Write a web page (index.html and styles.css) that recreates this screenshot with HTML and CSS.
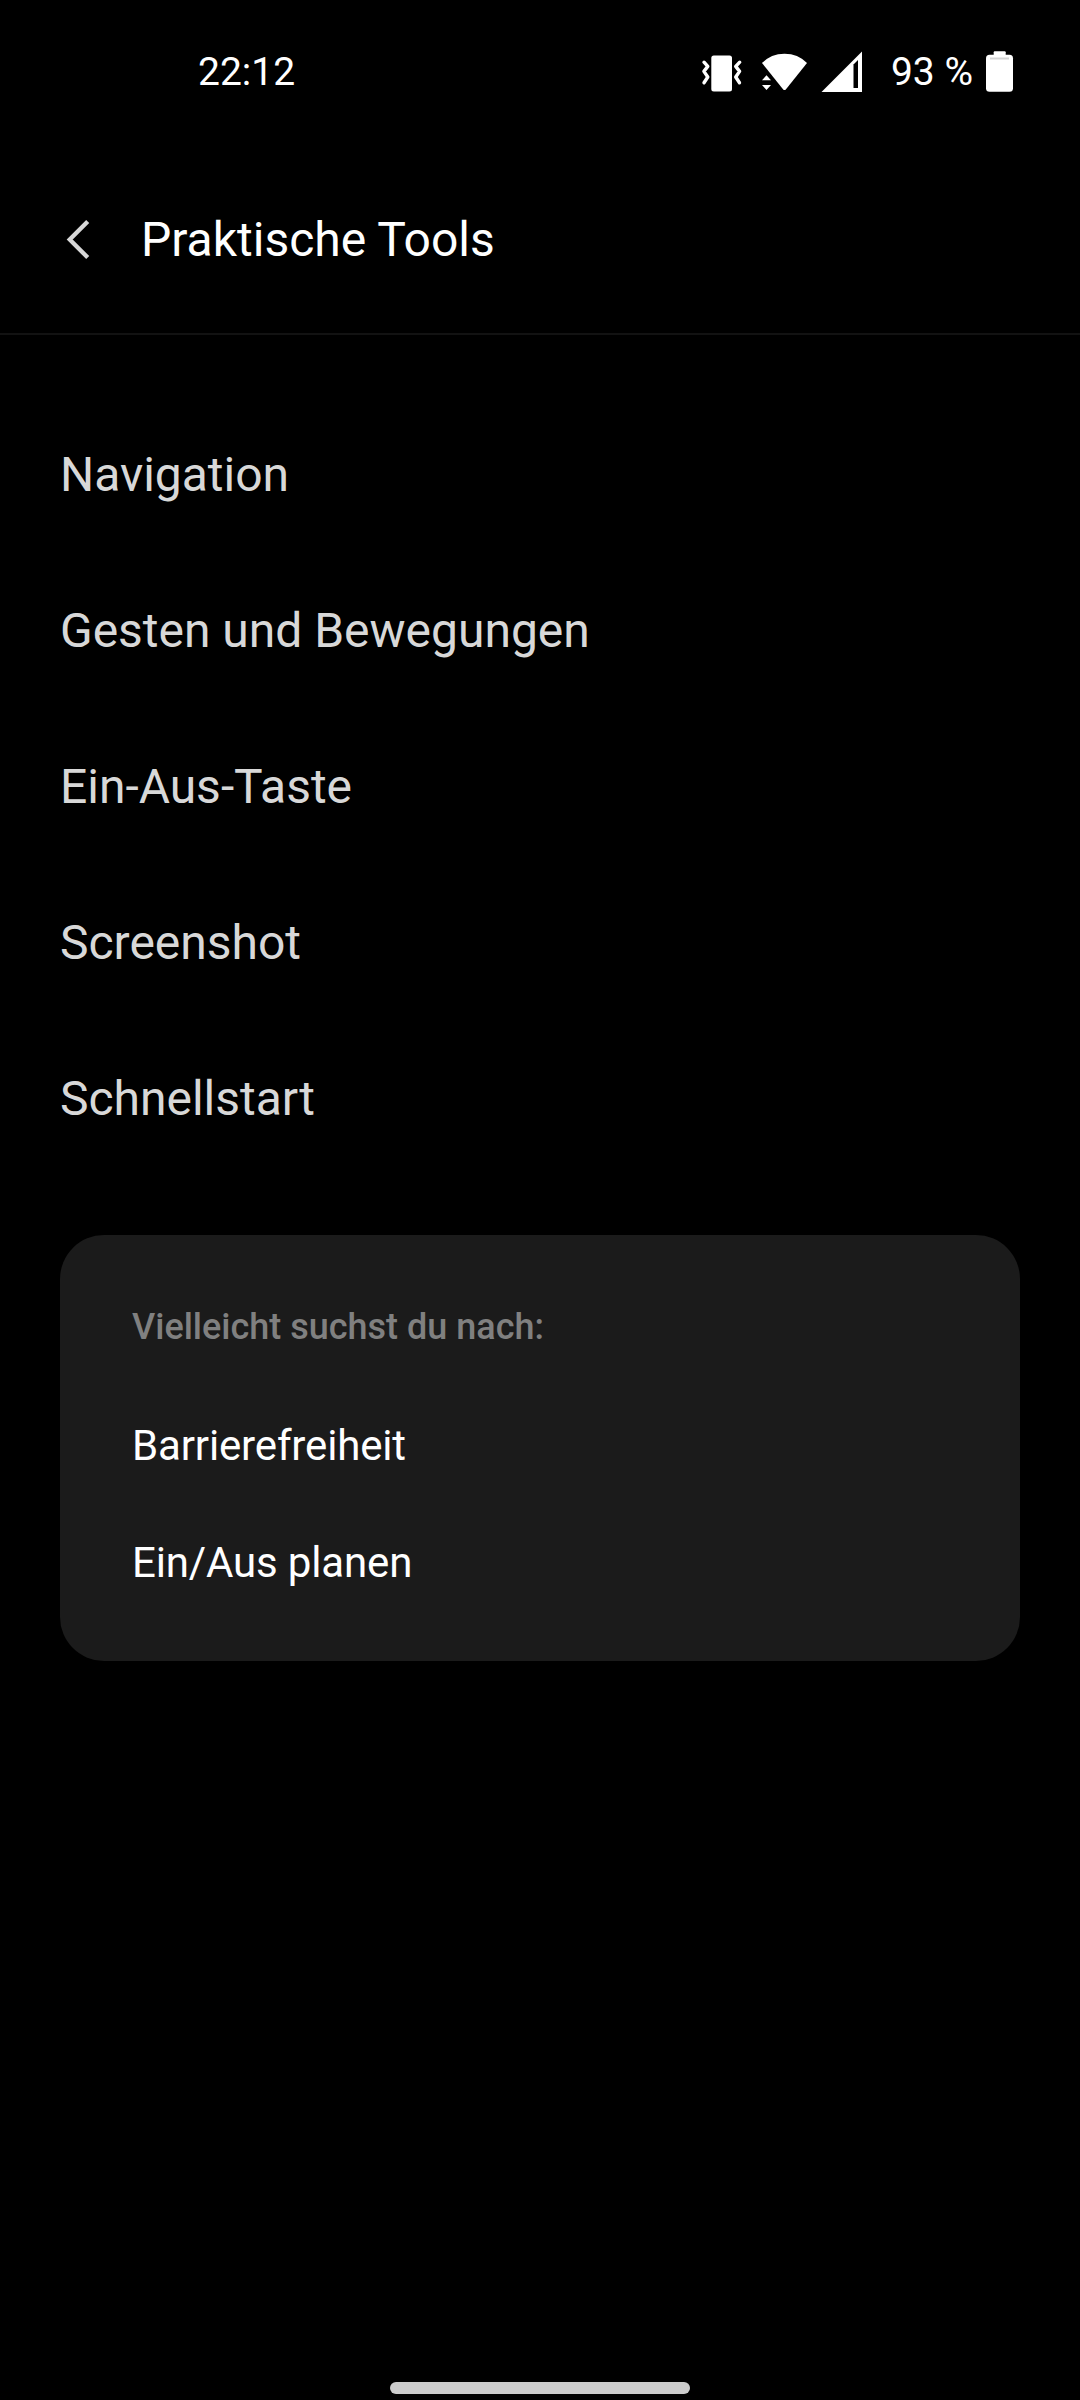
FILE: index.html
```html
<!DOCTYPE html>
<html lang="de">
<head>
<meta charset="utf-8">
<title>Praktische Tools</title>
<link rel="stylesheet" href="styles.css">
</head>
<body>
<div class="status-bar">
  <span class="clock">22:12</span>
  <div class="status-icons">
    <svg class="vibrate" width="42" height="42" viewBox="0 0 42 42"><rect x="10.3" y="4.5" width="20.7" height="36" rx="2.5" fill="#fff"/><path d="M3 11.2 6.8 15.4 2.9 20.4 6.8 26 3 31.8M38.7 11.2 34.7 15.4 38.6 20.4 34.7 26 38.5 31.8" fill="none" stroke="#fff" stroke-width="3.4" stroke-linecap="round" stroke-linejoin="round"/></svg>
    <svg class="wifi" width="46" height="42" viewBox="0 0 46 42"><path d="M1 12Q10 2.7 23.5 2.7T46 12L25 38.2Q23.5 40 22 38.2Z" fill="#fff"/><path d="M1 29.3 5.5 24.3 10 29.3ZM1 34H10L5.5 39Z" fill="#fff"/></svg>
    <svg class="signal" width="42" height="42" viewBox="0 0 42 42"><path d="M42 .5V41H1.5Z" fill="#fff"/><path d="M33.5 13.5 38 9V37H33.5Z" fill="#000"/></svg>
    <span class="percent">93 %</span>
    <svg class="battery" width="28" height="42" viewBox="0 0 28 42"><rect y="3.7" width="27" height="37" rx="3.5" fill="#fff"/><rect x="7.7" y=".2" width="12" height="6" rx="1" fill="#fff"/><path d="M4 7.5H23" stroke="#d4d4d4" stroke-width="2"/></svg>
  </div>
</div>
<header class="header">
  <svg class="back" width="28" height="42" viewBox="0 0 28 42"><path d="M23.7 3.4 5.7 21.5 23.7 39.5" fill="none" stroke="#d8d8d8" stroke-width="4.3"/></svg>
  <h1 class="title">Praktische Tools</h1>
</header>
<ul class="menu">
  <li class="menu-item">Navigation</li>
  <li class="menu-item">Gesten und Bewegungen</li>
  <li class="menu-item">Ein-Aus-Taste</li>
  <li class="menu-item">Screenshot</li>
  <li class="menu-item">Schnellstart</li>
</ul>
<section class="card">
  <h2 class="card-title">Vielleicht suchst du nach:</h2>
  <a class="card-link">Barrierefreiheit</a>
  <a class="card-link">Ein/Aus planen</a>
</section>
<div class="home-bar"></div>
</body>
</html>
```
FILE: styles.css
```css
* { box-sizing: border-box; margin: 0; padding: 0; }
body { width: 1080px; height: 2400px; background: #000; color: #fff; font-family: Roboto, sans-serif; display: flex; flex-direction: column; overflow: hidden; }
.status-bar { height: 144px; padding: 0 66px 0 198px; display: flex; align-items: center; justify-content: space-between; font-size: 39px; }
.status-icons { display: flex; align-items: center; }
.wifi { margin-left: 18px; }
.signal { margin-left: 13px; }
.percent { margin: 0 13px 0 29px; }
.header { height: 191px; border-bottom: 2px solid #121212; display: flex; align-items: center; padding: 1px 0 0 64px; }
.title { font-size: 48px; font-weight: 400; margin-left: 49px; }
.menu { list-style: none; padding-top: 62px; }
.menu-item { height: 156px; line-height: 156px; padding-left: 60px; font-size: 48px; letter-spacing: -0.02px; color: #d8d8d8; }
.card { margin: 58px 60px 0; height: 426px; border-radius: 44px; background: #1b1b1b; padding: 60px 72px; display: flex; flex-direction: column; }
.card-title { margin-bottom: 28px; font-size: 36px; line-height: 64px; font-weight: 500; color: #808080; }
.card-link { font-size: 42px; line-height: 117px; letter-spacing: -0.15px; }
.home-bar { width: 300px; height: 12px; border-radius: 6px; background: #ccc; margin: auto auto 6px; }
```
